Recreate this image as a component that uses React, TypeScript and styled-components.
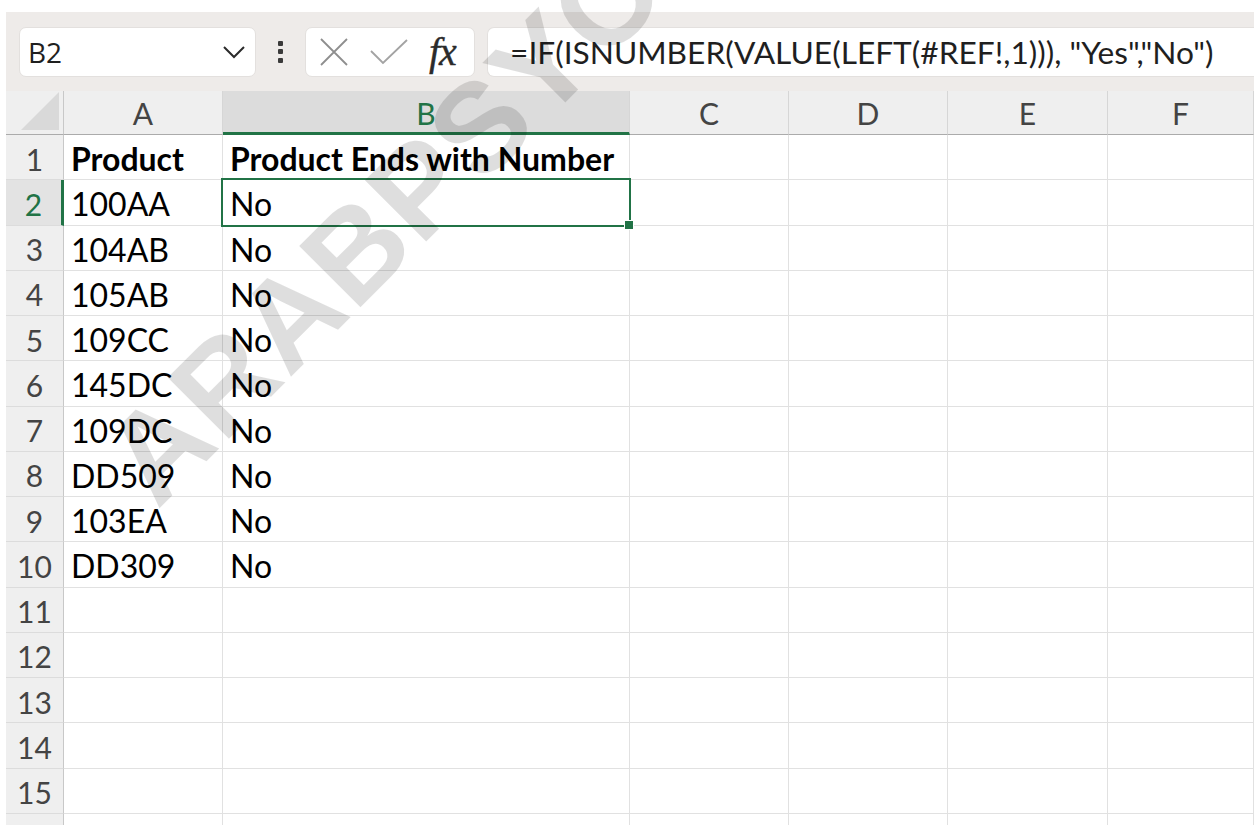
import styled, { createGlobalStyle } from "styled-components";

const GlobalStyle = createGlobalStyle`
  html, body {
    margin: 0;
    padding: 0;
    background: #fff;
    overflow: hidden;
  }
  * {
    box-sizing: border-box;
  }
`;

const CELL_FONT = `"Lato", "Liberation Sans", sans-serif`;
const UI_FONT = `"Open Sans", "Noto Sans", sans-serif`;
const GREEN = "#217346";
const ROW_HEIGHT = 45.25;

const Page = styled.div`
  position: relative;
  width: 1254px;
  height: 825px;
  padding: 12px 0 0 6px;
  overflow: hidden;
  background: #fff;
`;

const FormulaBar = styled.div`
  display: flex;
  align-items: center;
  height: 79px;
  padding-left: 13px;
  background: #eeebe9;
`;

const Field = styled.div<{ width?: number }>`
  display: flex;
  align-items: center;
  height: 50px;
  background: #fff;
  border: 1px solid #e3e0de;
  border-radius: 7px;
  ${(p) => (p.width ? `width: ${p.width}px; flex: none;` : "flex: 1;")}
`;

const NameBox = styled(Field)`
  justify-content: space-between;
  padding: 0 9px 0 8px;
  font-family: ${UI_FONT};
  font-size: 28px;
  color: #1f1f1f;
`;

const Grip = styled.div`
  display: flex;
  flex-direction: column;
  justify-content: space-between;
  width: 5px;
  height: 22px;
  margin: 0 22px 0 22px;

  span {
    display: block;
    width: 5px;
    height: 5px;
    background: #3a3a3a;
    border-radius: 1px;
  }
`;

const FxBox = styled(Field)`
  gap: 22px;
  padding: 0 0 0 14px;
`;

const FxLabel = styled.span`
  font-family: "Liberation Serif", "DejaVu Serif", serif;
  font-style: italic;
  font-size: 40px;
  line-height: 1;
  color: #2b2b2b;
  margin-left: -1px;
  letter-spacing: -1px;
  -webkit-text-stroke: 0.4px #2b2b2b;
`;

const FormulaBox = styled(Field)`
  margin-left: 12px;
  padding-left: 22px;
  border-right: none;
  border-top-right-radius: 0;
  border-bottom-right-radius: 0;
  font-family: ${CELL_FONT};
  font-size: 31.7px;
  color: #1f1f1f;
  white-space: nowrap;
  overflow: hidden;
`;

const Sheet = styled.div`
  display: grid;
  grid-template-columns: 58px 159px 407px 159px 159px 160px 1fr;
  grid-template-rows: 44px;
  grid-auto-rows: ${ROW_HEIGHT}px;
`;

const Corner = styled.div`
  position: relative;
  background: #efefef;
  border-right: 1px solid #c8c8c8;
  border-bottom: 1px solid #ababab;

  &::after {
    content: "";
    position: absolute;
    right: 4px;
    bottom: 4px;
    width: 38px;
    height: 38px;
    background: #d9d9d9;
    clip-path: polygon(100% 0, 100% 100%, 0 100%);
  }
`;

const ColHeader = styled.div<{ $active?: boolean }>`
  display: flex;
  align-items: center;
  justify-content: center;
  font-family: ${CELL_FONT};
  font-size: 30px;
  color: ${(p) => (p.$active ? GREEN : "#444")};
  background: ${(p) => (p.$active ? "#dcdcdc" : "#efefef")};
  border-right: 1px solid #d6d6d6;
  border-bottom: ${(p) => (p.$active ? `3px solid ${GREEN}` : "1px solid #ababab")};
  padding-top: ${(p) => (p.$active ? "2px" : "0")};
`;

const RowHeader = styled.div<{ $active?: boolean }>`
  display: flex;
  align-items: center;
  justify-content: center;
  font-family: ${CELL_FONT};
  font-size: 30px;
  color: ${(p) => (p.$active ? GREEN : "#444")};
  background: ${(p) => (p.$active ? "#e3e3e3" : "#efefef")};
  border-bottom: 1px solid #dcdcdc;
  border-right: ${(p) => (p.$active ? `3px solid ${GREEN}` : "1px solid #c8c8c8")};
  padding-top: 3px;
`;

const Cell = styled.div<{ $bold?: boolean }>`
  position: relative;
  display: flex;
  align-items: center;
  padding: 3px 0 0 7px;
  font-family: ${CELL_FONT};
  font-size: 32px;
  font-weight: ${(p) => (p.$bold ? 700 : 400)};
  color: #000;
  white-space: nowrap;
  border-right: 1px solid #e1e1e1;
  border-bottom: 1px solid #e1e1e1;
`;

const Selection = styled.div`
  position: absolute;
  left: -2px;
  top: -2px;
  right: -2px;
  bottom: -2px;
  border: 2px solid ${GREEN};
  pointer-events: none;
  z-index: 2;

  &::after {
    content: "";
    position: absolute;
    right: -5px;
    bottom: -5px;
    width: 8px;
    height: 8px;
    background: ${GREEN};
    border: 1px solid #fff;
  }
`;

const Watermark = styled.div`
  position: absolute;
  left: 385px;
  top: 222px;
  transform: translate(-50%, -50%) rotate(-45deg);
  font-family: "Liberation Sans", sans-serif;
  font-weight: 700;
  font-size: 126px;
  line-height: 1;
  letter-spacing: 2px;
  color: rgba(0, 0, 0, 0.13);
  white-space: nowrap;
  pointer-events: none;
  z-index: 5;
`;

const columns = ["A", "B", "C", "D", "E", "F"];

const rows: [string, string][] = [
  ["Product", "Product Ends with Number"],
  ["100AA", "No"],
  ["104AB", "No"],
  ["105AB", "No"],
  ["109CC", "No"],
  ["145DC", "No"],
  ["109DC", "No"],
  ["DD509", "No"],
  ["103EA", "No"],
  ["DD309", "No"],
];

// 15 numbered rows, plus the sliver of the next one at the bottom edge
const VISIBLE_ROWS = 15;

const Chevron = () => (
  <svg width="24" height="14" viewBox="0 0 24 14" fill="none">
    <polyline points="2,2 12,12 22,2" stroke="#2b2b2b" strokeWidth="2" />
  </svg>
);

const CancelIcon = () => (
  <svg width="28" height="28" viewBox="0 0 28 28" fill="none">
    <path d="M1 1 L27 27 M27 1 L1 27" stroke="#8e8e8e" strokeWidth="1.8" />
  </svg>
);

const EnterIcon = () => (
  <svg width="38" height="26" viewBox="0 0 38 26" fill="none">
    <polyline points="1,12 13,24 37,1" stroke="#a3a3a3" strokeWidth="1.8" />
  </svg>
);

export default function App() {
  return (
    <>
      <GlobalStyle />
      <Page>
        <FormulaBar>
          <NameBox width={237}>
            <span>B2</span>
            <Chevron />
          </NameBox>
          <Grip>
            <span />
            <span />
            <span />
          </Grip>
          <FxBox width={170}>
            <CancelIcon />
            <EnterIcon />
            <FxLabel>fx</FxLabel>
          </FxBox>
          <FormulaBox>=IF(ISNUMBER(VALUE(LEFT(#REF!,1))), "Yes","No")</FormulaBox>
        </FormulaBar>

        <Sheet>
          <Corner />
          {columns.map((c) => (
            <ColHeader key={c} $active={c === "B"}>
              {c}
            </ColHeader>
          ))}

          {Array.from({ length: VISIBLE_ROWS + 1 }, (_, i) => {
            const n = i + 1;
            const data = rows[i] ?? ["", ""];
            return [
              <RowHeader key={`h${n}`} $active={n === 2}>
                {n <= VISIBLE_ROWS ? n : ""}
              </RowHeader>,
              ...columns.map((c, ci) => (
                <Cell key={`${c}${n}`} $bold={n === 1}>
                  {ci < 2 ? data[ci] : ""}
                  {n === 2 && c === "B" && <Selection />}
                </Cell>
              )),
            ];
          })}
        </Sheet>

        <Watermark>ARABPSYO</Watermark>
      </Page>
    </>
  );
}
